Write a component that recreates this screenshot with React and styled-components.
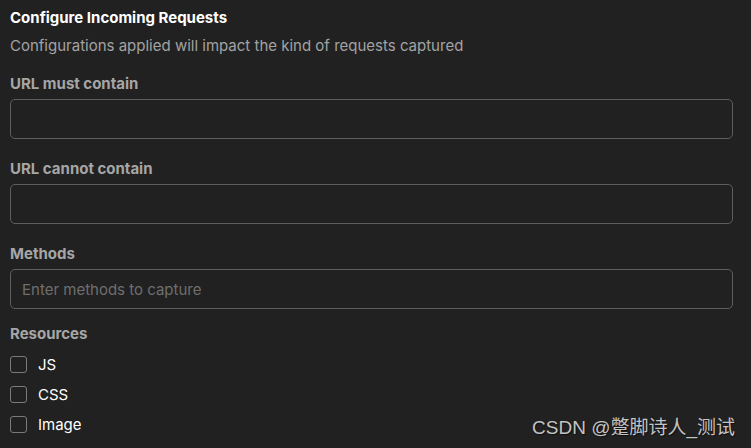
import styled, { createGlobalStyle } from "styled-components";

const GlobalStyle = createGlobalStyle`
  html, body {
    margin: 0;
    padding: 0;
    background: #212121;
  }
  body {
    font-family: Inter, "Noto Sans", sans-serif;
  }
`;

const Page = styled.div`
  position: relative;
  width: 751px;
  height: 448px;
  box-sizing: border-box;
  padding: 8px 18px 0 10px;
  background: #212121;
  overflow: hidden;
`;

const Title = styled.h2`
  margin: 0;
  font-size: 15px;
  line-height: 20px;
  font-weight: 700;
  color: #ffffff;
`;

const Subtitle = styled.p`
  margin: 8px 0 18px;
  font-size: 15px;
  line-height: 20px;
  color: #a3a3a3;
`;

const Fields = styled.div`
  display: flex;
  flex-direction: column;
  gap: 20px;
`;

const Field = styled.div`
  display: flex;
  flex-direction: column;
  gap: 5px;
`;

const Section = styled.div`
  display: flex;
  flex-direction: column;
  gap: 5px;
  margin-top: 15px;
`;

const Label = styled.label`
  font-size: 15px;
  line-height: 20px;
  font-weight: 700;
  color: #a6a6a6;
`;

const Input = styled.input`
  box-sizing: border-box;
  width: 100%;
  height: 40px;
  padding: 0 11px;
  background: transparent;
  border: 1px solid #5e5e5e;
  border-radius: 5px;
  font-family: Inter, "Noto Sans", sans-serif;
  font-size: 15px;
  color: #e6e6e6;
  outline: none;

  &::placeholder {
    color: #6e6e6e;
  }
`;

const CheckList = styled.div`
  display: flex;
  flex-direction: column;
`;

const CheckRow = styled.label`
  display: flex;
  align-items: center;
  gap: 11px;
  height: 30px;
  font-size: 15px;
  color: #ffffff;
`;

const Box = styled.span`
  box-sizing: border-box;
  width: 17px;
  height: 17px;
  border: 1px solid #7a7a7a;
  border-radius: 3px;
`;

const Watermark = styled.div`
  position: absolute;
  right: 16px;
  bottom: 8px;
  font-family: "Liberation Sans", "Noto Sans CJK SC", sans-serif;
  font-size: 19px;
  line-height: 24px;
  color: #c4c4c4;
  text-shadow: 1px 1px 1px rgba(0, 0, 0, 0.6);
`;

const fields = [
  { label: "URL must contain", placeholder: "" },
  { label: "URL cannot contain", placeholder: "" },
  { label: "Methods", placeholder: "Enter methods to capture" },
];

const resources = ["JS", "CSS", "Image"];

export default function App() {
  return (
    <Page>
      <GlobalStyle />
      <Title>Configure Incoming Requests</Title>
      <Subtitle>Configurations applied will impact the kind of requests captured</Subtitle>
      <Fields>
        {fields.map((f) => (
          <Field key={f.label}>
            <Label>{f.label}</Label>
            <Input placeholder={f.placeholder} />
          </Field>
        ))}
      </Fields>
      <Section>
        <Label>Resources</Label>
        <CheckList>
          {resources.map((r) => (
            <CheckRow key={r}>
              <Box />
              {r}
            </CheckRow>
          ))}
        </CheckList>
      </Section>
      <Watermark>CSDN @蹩脚诗人_测试</Watermark>
    </Page>
  );
}
